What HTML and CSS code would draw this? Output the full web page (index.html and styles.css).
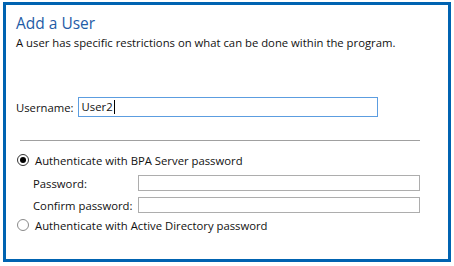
FILE: index.html
```html
<!DOCTYPE html>
<html lang="en">
<head>
  <meta charset="UTF-8" />
  <title>Add a User</title>
  <link rel="stylesheet" href="styles.css">
</head>
<body>
  <div class="frame">
    <h1 class="title">Add a User</h1>
    <p class="desc">A user has specific restrictions on what can be done within the program.</p>

    <div class="user-row">
      <label class="user-label">Username:</label>
      <div class="textbox focused"><span>User2</span><span class="caret"></span></div>
    </div>

    <div class="sep"></div>

    <div class="option first">
      <span class="radio checked"></span>
      <span>Authenticate with BPA Server password</span>
    </div>
    <div class="fields">
      <label>Password:</label>
      <div class="textbox small"></div>
      <label>Confirm password:</label>
      <div class="textbox small"></div>
    </div>
    <div class="option">
      <span class="radio"></span>
      <span>Authenticate with Active Directory password</span>
    </div>
  </div>
</body>
</html>
```

FILE: styles.css
```css
* { box-sizing: border-box; margin: 0; padding: 0; }

body {
  font-family: 'Open Sans', 'Noto Sans', sans-serif;
  font-size: 11.3px;
  color: #111;
  background: #fff;
  width: 454px;
  height: 266px;
  overflow: hidden;
}

.frame {
  margin: 2px 3px;
  height: 260px;
  border: 3px solid #0063b1;
  padding: 6px 10px 0 10px;
}

.title {
  font-size: 15.5px;
  font-weight: normal;
  color: #1f5ca6;
  line-height: 24px;
}

.desc {
  line-height: 16px;
  white-space: nowrap;
}

.user-row {
  display: flex;
  align-items: center;
  gap: 4px;
  margin-top: 46px;
}

.textbox {
  border: 1px solid #adadad;
  background: #fff;
  height: 16px;
}

.textbox.focused {
  width: 300px;
  height: 20px;
  border-color: #5c9de0;
  padding: 0 3px;
  line-height: 18px;
  display: flex;
  align-items: center;
}

.caret {
  display: inline-block;
  width: 1px;
  height: 14px;
  background: #000;
  margin-left: 1px;
}

.sep {
  height: 1px;
  background: #a0a0a0;
  margin: 23px 18px 0 4px;
}

.option {
  display: flex;
  align-items: center;
  gap: 6px;
  margin-left: 1px;
  height: 16px;
  white-space: nowrap;
}

.option.first { margin-top: 11px; }

.radio {
  width: 12px;
  height: 12px;
  border-radius: 50%;
  border: 1px solid #8a8a8a;
  display: flex;
  align-items: center;
  justify-content: center;
}

.radio.checked {
  border-color: #333;
}

.radio.checked::after {
  content: "";
  width: 6px;
  height: 6px;
  border-radius: 50%;
  background: #000;
}

.fields {
  display: grid;
  grid-template-columns: 105px 282px;
  align-items: center;
  row-gap: 6px;
  margin: 7px 0 4px 17px;
  white-space: nowrap;
}
```
